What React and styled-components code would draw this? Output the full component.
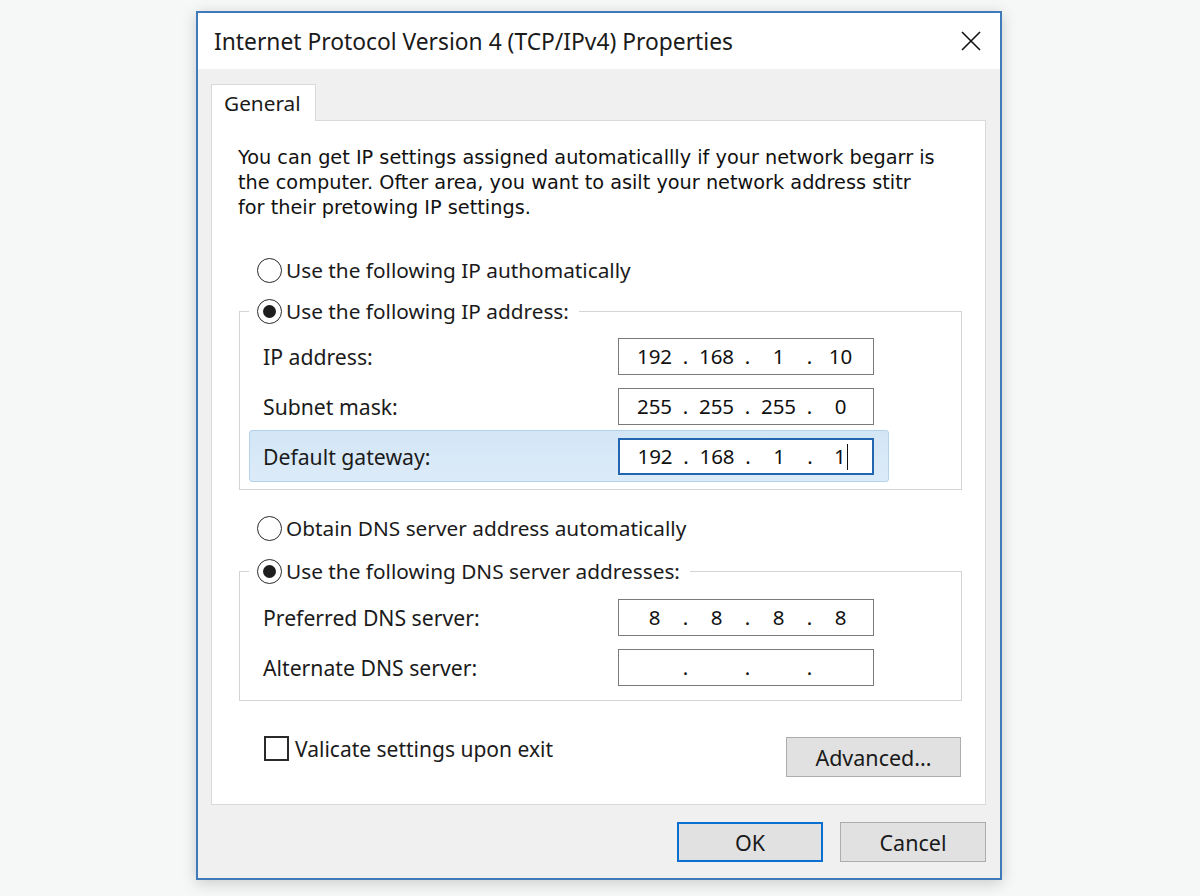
import React from "react";
import styled, { createGlobalStyle } from "styled-components";

const Global = createGlobalStyle`
  html, body { margin: 0; padding: 0; }
  body {
    background: #f6f7f7;
    font-family: "Noto Sans", "Open Sans", sans-serif;
    color: #1b1b1b;
  }
`;

const Page = styled.div`
  width: 1200px;
  height: 896px;
  padding: 11px 0 0 196px;
  box-sizing: border-box;
`;

const Window = styled.div`
  width: 806px;
  height: 869px;
  box-sizing: border-box;
  border: 2px solid #3f7bb8;
  background: #f0f0f0;
  box-shadow: 0 3px 14px rgba(0, 0, 0, 0.18);
  display: flex;
  flex-direction: column;
`;

const TitleBar = styled.div`
  height: 56px;
  background: #ffffff;
  display: flex;
  align-items: center;
  justify-content: space-between;
  padding: 0 19px 0 16px;
  flex-shrink: 0;
`;

const Title = styled.div`
  font-size: 22.8px;
  color: #1a1a1a;
`;

const CloseIcon = styled.svg`
  width: 20px;
  height: 20px;
  display: block;
`;

const Body = styled.div`
  flex: 1;
  padding: 15px 14px 0 13px;
  display: flex;
  flex-direction: column;
`;

const TabStrip = styled.div`
  display: flex;
  position: relative;
  z-index: 1;
  margin-bottom: -1px;
`;

const Tab = styled.div`
  width: 105px;
  height: 37px;
  box-sizing: border-box;
  background: #ffffff;
  border: 1px solid #d9d9d9;
  border-bottom: none;
  font-size: 20.8px;
  padding-left: 12px;
  display: flex;
  align-items: center;
`;

const Panel = styled.div`
  height: 685px;
  box-sizing: border-box;
  background: #ffffff;
  border: 1px solid #d9d9d9;
  padding: 24px 23px 0 26px;
  display: flex;
  flex-direction: column;
`;

const Description = styled.div`
  font-family: "DejaVu Sans", sans-serif;
  font-size: 19.3px;
  line-height: 25px;
  color: #111;
`;

const Line = styled.div`
  white-space: nowrap;
`;

const RadioRow = styled.label`
  display: flex;
  align-items: center;
  height: 28px;
  margin-left: ${(p) => p.$indent ?? 19}px;
  margin-top: ${(p) => p.$top || 0}px;
  font-size: 20.8px;
  gap: 4px;
  background: #fff;
`;

const RadioCircle = styled.span`
  width: 25px;
  height: 25px;
  box-sizing: border-box;
  border-radius: 50%;
  border: 1.6px solid #2a2a2a;
  display: flex;
  align-items: center;
  justify-content: center;
  flex-shrink: 0;
  &::after {
    content: "";
    width: 13px;
    height: 13px;
    border-radius: 50%;
    background: ${(p) => (p.$checked ? "#1e1e1e" : "transparent")};
  }
`;

const Group = styled.fieldset`
  margin: ${(p) => p.$top}px 0 0 1px;
  padding: ${(p) => p.$pt}px 0 8px 0;
  border: 1px solid #d4d4d4;
  width: 723px;
  box-sizing: border-box;
  min-width: 0;
`;

const Legend = styled.legend`
  margin-left: 9px;
  padding: 0 10px 0 8px;
  background: #fff;
`;

const FieldRow = styled.div`
  height: ${(p) => (p.$active ? 52 : 50)}px;
  margin: ${(p) => (p.$active ? "-1px 0 -1px 9px" : "0 0 0 9px")};
  width: 640px;
  box-sizing: border-box;
  display: flex;
  align-items: center;
  justify-content: space-between;
  padding: 0 14px 0 13px;
  font-size: 21.2px;
  border-radius: 3px;
  border: 1px solid ${(p) => (p.$active ? "#b3d2ec" : "transparent")};
  background: ${(p) =>
    p.$active ? "linear-gradient(#d3e6f6, #dcebf8)" : "transparent"};
`;

const IpBox = styled.div`
  width: 256px;
  height: 37px;
  box-sizing: border-box;
  background: #fff;
  border: ${(p) => (p.$focus ? "2px solid #2266b0" : "1.5px solid #7a7a7a")};
  display: flex;
  align-items: center;
  padding-left: ${(p) => (p.$focus ? 12 : 12.5)}px;
  font-size: 20.5px;
  color: #111;
`;

const Octet = styled.span`
  width: 46px;
  text-align: center;
`;

const Dot = styled.span`
  width: 16px;
  text-align: center;
`;

const Caret = styled.span`
  display: inline-block;
  width: 1.5px;
  height: 26px;
  background: #111;
  vertical-align: middle;
  margin-left: 1px;
  margin-top: -3px;
`;

const BottomRow = styled.div`
  display: flex;
  justify-content: space-between;
  align-items: flex-start;
  margin-top: 35px;
  margin-left: 26px;
  width: 697px;
`;

const CheckRow = styled.label`
  display: flex;
  align-items: center;
  gap: 6px;
  font-size: 21px;
  height: 25px;
`;

const CheckBox = styled.span`
  width: 25px;
  height: 25px;
  box-sizing: border-box;
  border: 2px solid #2a2a2a;
  background: #fff;
`;

const Button = styled.button`
  width: ${(p) => p.$w || 146}px;
  height: 40px;
  box-sizing: border-box;
  background: #e1e1e1;
  border: ${(p) => (p.$primary ? "2px solid #0a6fcf" : "1px solid #adadad")};
  font-family: "Noto Sans", "Open Sans", sans-serif;
  font-size: 21.5px;
  color: #1a1a1a;
  padding: 0;
  margin: ${(p) => p.$m || 0};
`;

const Footer = styled.div`
  display: flex;
  justify-content: flex-end;
  gap: 17px;
  margin-top: 17px;
`;

function IpField({ parts, focus }) {
  return (
    <IpBox $focus={focus}>
      {parts.map((p, i) => (
        <React.Fragment key={i}>
          {i > 0 && <Dot>.</Dot>}
          <Octet>
            {p}
            {focus && i === 3 && <Caret />}
          </Octet>
        </React.Fragment>
      ))}
    </IpBox>
  );
}

function Radio({ checked, children, ...rest }) {
  return (
    <RadioRow {...rest}>
      <RadioCircle $checked={checked} />
      <span>{children}</span>
    </RadioRow>
  );
}

export default function App() {
  return (
    <Page>
      <Global />
      <Window>
        <TitleBar>
          <Title>Internet Protocol Version 4 (TCP/IPv4) Properties</Title>
          <CloseIcon viewBox="0 0 20 20">
            <path d="M1 1 L19 19 M19 1 L1 19" stroke="#111" strokeWidth="1.6" fill="none" />
          </CloseIcon>
        </TitleBar>
        <Body>
          <TabStrip>
            <Tab>General</Tab>
          </TabStrip>
          <Panel>
            <Description>
              <Line>You can get IP settings assigned automaticallly if your network begarr is</Line>
              <Line>the computer. Ofter area, you want to asilt your network address stitr</Line>
              <Line>for their pretowing IP settings.</Line>
            </Description>
            <Radio $top={36}>Use the following IP authomatically</Radio>
            <Group $top={13} $pt={6}>
              <Legend>
                <Radio $indent={0} checked>
                  Use the following IP address:
                </Radio>
              </Legend>
              <FieldRow>
                <span>IP address:</span>
                <IpField parts={["192", "168", "1", "10"]} />
              </FieldRow>
              <FieldRow>
                <span>Subnet mask:</span>
                <IpField parts={["255", "255", "255", "0"]} />
              </FieldRow>
              <FieldRow $active>
                <span>Default gateway:</span>
                <IpField parts={["192", "168", "1", "1"]} focus />
              </FieldRow>
            </Group>
            <Radio $top={24}>Obtain DNS server address automatically</Radio>
            <Group $top={15} $pt={7}>
              <Legend>
                <Radio $indent={0} checked>
                  Use the following DNS server addresses:
                </Radio>
              </Legend>
              <FieldRow>
                <span>Preferred DNS server:</span>
                <IpField parts={["8", "8", "8", "8"]} />
              </FieldRow>
              <FieldRow>
                <span>Alternate DNS server:</span>
                <IpField parts={["", "", "", ""]} />
              </FieldRow>
            </Group>
            <BottomRow>
              <CheckRow>
                <CheckBox />
                <span>Valicate settings upon exit</span>
              </CheckRow>
              <Button $w={175} $m="1px 0 0 0">Advanced...</Button>
            </BottomRow>
          </Panel>
          <Footer>
            <Button $primary>OK</Button>
            <Button>Cancel</Button>
          </Footer>
        </Body>
      </Window>
    </Page>
  );
}
